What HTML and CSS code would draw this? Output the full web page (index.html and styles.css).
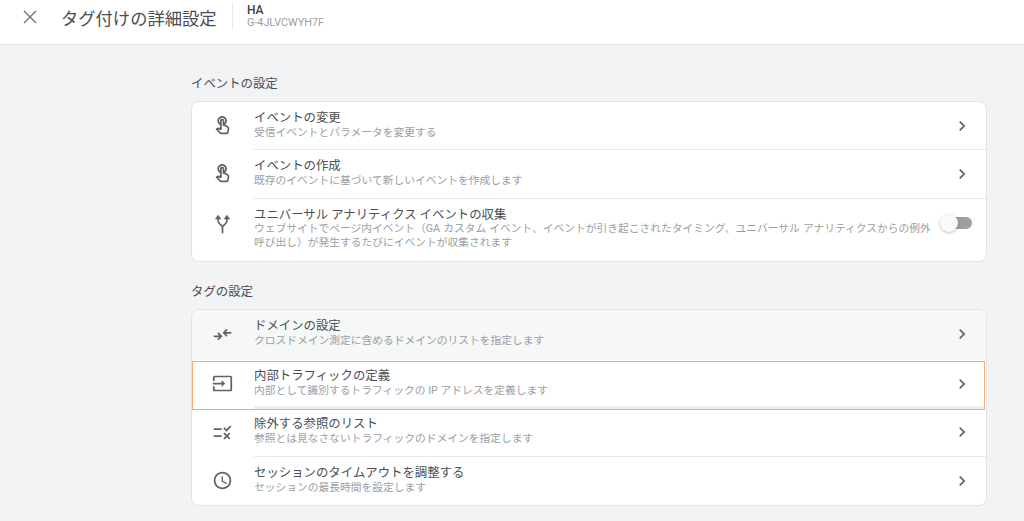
FILE: index.html
```html
<!DOCTYPE html>
<html lang="ja">
<head>
<meta charset="utf-8">
<title>タグ付けの詳細設定</title>
<link rel="stylesheet" href="styles.css">
</head>
<body>
<header class="topbar">
  <svg class="close" viewBox="0 0 14 14"><path d="M1 1l12 12M13 1L1 13"/></svg>
  <h1 class="page-title">タグ付けの詳細設定</h1>
  <div class="stream">
    <div class="stream-name">HA</div>
    <div class="stream-id">G-4JLVCWYH7F</div>
  </div>
</header>
<main class="content">
  <h2 class="section-title">イベントの設定</h2>
  <section class="card">
    <div class="row row-first">
      <svg class="icon" viewBox="0 0 24 24"><path d="M18.19 12.44l-3.24-1.62c1.29-1 2.12-2.56 2.12-4.32 0-3.03-2.47-5.5-5.5-5.5s-5.5 2.47-5.5 5.5c0 2.13 1.22 3.98 3 4.89v3.26c-2.15-.46-2.02-.44-2.26-.44-.53 0-1.03.21-1.41.59L4 16.22l5.09 5.09C9.52 21.75 10.12 22 10.74 22h6.3c.98 0 1.81-.7 1.97-1.67l.8-4.71c.22-1.3-.43-2.58-1.62-3.18zm-.35 7.56H10.74c-.27 0-.52-.11-.71-.29l-3.27-3.27 4.4.92V6.5c0-.28.22-.5.5-.5s.5.22.5.5v6h1.76l3.46 1.73c.4.2.62.63.55 1.06l-.81 4.71zM8.07 6.5c0-1.93 1.57-3.5 3.5-3.5s3.5 1.57 3.5 3.5c0 .95-.38 1.81-1 2.44V6.5c0-1.38-1.12-2.5-2.5-2.5s-2.5 1.12-2.5 2.5v2.44c-.62-.63-1-1.49-1-2.44z"/></svg>
      <div class="text">
        <div class="row-title">イベントの変更</div>
        <div class="row-desc">受信イベントとパラメータを変更する</div>
      </div>
      <svg class="chevron" viewBox="0 0 24 24"><path d="M10 6L8.59 7.41 13.17 12l-4.58 4.59L10 18l6-6z"/></svg>
    </div>
    <div class="row">
      <svg class="icon" viewBox="0 0 24 24"><path d="M18.19 12.44l-3.24-1.62c1.29-1 2.12-2.56 2.12-4.32 0-3.03-2.47-5.5-5.5-5.5s-5.5 2.47-5.5 5.5c0 2.13 1.22 3.98 3 4.89v3.26c-2.15-.46-2.02-.44-2.26-.44-.53 0-1.03.21-1.41.59L4 16.22l5.09 5.09C9.52 21.75 10.12 22 10.74 22h6.3c.98 0 1.81-.7 1.97-1.67l.8-4.71c.22-1.3-.43-2.58-1.62-3.18zm-.35 7.56H10.74c-.27 0-.52-.11-.71-.29l-3.27-3.27 4.4.92V6.5c0-.28.22-.5.5-.5s.5.22.5.5v6h1.76l3.46 1.73c.4.2.62.63.55 1.06l-.81 4.71zM8.07 6.5c0-1.93 1.57-3.5 3.5-3.5s3.5 1.57 3.5 3.5c0 .95-.38 1.81-1 2.44V6.5c0-1.38-1.12-2.5-2.5-2.5s-2.5 1.12-2.5 2.5v2.44c-.62-.63-1-1.49-1-2.44z"/></svg>
      <div class="text">
        <div class="row-title">イベントの作成</div>
        <div class="row-desc">既存のイベントに基づいて新しいイベントを作成します</div>
      </div>
      <svg class="chevron" viewBox="0 0 24 24"><path d="M10 6L8.59 7.41 13.17 12l-4.58 4.59L10 18l6-6z"/></svg>
    </div>
    <div class="row row-tall">
      <svg class="icon" viewBox="0 0 24 24"><path class="icon-line" d="M12 23v-7c0-2-5-3-5-7V5M12 16c0-2 5-3 5-7V5"/><path d="M7 2L3.2 7h7.6zM17 2l-3.8 5h7.6z"/></svg>
      <div class="text">
        <div class="row-title">ユニバーサル アナリティクス イベントの収集</div>
        <div class="row-desc row-desc-spaced">ウェブサイトでページ内イベント（GA カスタム イベント、イベントが引き起こされたタイミング、ユニバーサル アナリティクスからの例外<br>呼び出し）が発生するたびにイベントが収集されます</div>
      </div>
      <div class="switch"><span class="knob"></span></div>
    </div>
  </section>

  <h2 class="section-title section-title-second">タグの設定</h2>
  <section class="card">
    <div class="row row-tint">
      <svg class="icon" viewBox="0 0 24 24"><path d="M2 13h6.2l-2.1-2.1 1.4-1.4L12 14l-4.5 4.5-1.4-1.4L8.2 15H2zM22 11h-6.2l2.1 2.1-1.4 1.4L12 10l4.5-4.5 1.4 1.4L15.8 9H22z"/></svg>
      <div class="text">
        <div class="row-title">ドメインの設定</div>
        <div class="row-desc">クロスドメイン測定に含めるドメインのリストを指定します</div>
      </div>
      <svg class="chevron" viewBox="0 0 24 24"><path d="M10 6L8.59 7.41 13.17 12l-4.58 4.59L10 18l6-6z"/></svg>
    </div>
    <div class="row row-active">
      <svg class="icon" viewBox="0 0 24 24"><path d="M21 3.01H3c-1.1 0-2 .9-2 2V9h2V4.99h18v14.03H3V15H1v4.01c0 1.1.9 1.98 2 1.98h18c1.1 0 2-.88 2-1.98v-14c0-1.11-.9-2-2-2zM11 16l4-4-4-4v3H1v2h10v3z"/></svg>
      <div class="text">
        <div class="row-title">内部トラフィックの定義</div>
        <div class="row-desc">内部として識別するトラフィックの IP アドレスを定義します</div>
      </div>
      <svg class="chevron" viewBox="0 0 24 24"><path d="M10 6L8.59 7.41 13.17 12l-4.58 4.59L10 18l6-6z"/></svg>
    </div>
    <div class="row row-short">
      <svg class="icon" viewBox="0 0 24 24"><path d="M16.54 11 13 7.46l1.41-1.41 2.12 2.12 4.24-4.24 1.41 1.41L16.54 11zM11 7H2v2h9V7zm10 6.41L19.59 12 17 14.59 14.41 12 13 13.41 15.59 16 13 18.59 14.41 20 17 17.41 19.59 20 21 18.59 18.41 16 21 13.41zM11 15H2v2h9v-2z"/></svg>
      <div class="text">
        <div class="row-title">除外する参照のリスト</div>
        <div class="row-desc">参照とは見なさないトラフィックのドメインを指定します</div>
      </div>
      <svg class="chevron" viewBox="0 0 24 24"><path d="M10 6L8.59 7.41 13.17 12l-4.58 4.59L10 18l6-6z"/></svg>
    </div>
    <div class="row">
      <svg class="icon" viewBox="0 0 24 24"><path d="M11.99 2C6.47 2 2 6.48 2 12s4.47 10 9.99 10C17.52 22 22 17.52 22 12S17.52 2 11.99 2zM12 20c-4.42 0-8-3.58-8-8s3.58-8 8-8 8 3.58 8 8-3.58 8-8 8zm.5-13H11v6l5.25 3.15.75-1.23-4.5-2.67z"/></svg>
      <div class="text">
        <div class="row-title">セッションのタイムアウトを調整する</div>
        <div class="row-desc">セッションの最長時間を設定します</div>
      </div>
      <svg class="chevron" viewBox="0 0 24 24"><path d="M10 6L8.59 7.41 13.17 12l-4.58 4.59L10 18l6-6z"/></svg>
    </div>
  </section>
</main>
</body>
</html>
```

FILE: styles.css
```css
* { box-sizing: border-box; }
html, body { margin: 0; height: 100%; overflow: hidden; }
body {
  background: #f1f3f4;
  font-family: Roboto, "Noto Sans CJK JP", sans-serif;
  color: #3c4043;
}
.topbar {
  display: flex;
  align-items: center;
  height: 45px;
  background: #fff;
  border-bottom: 1px solid #e4e6e8;
  padding: 0 0 10px 23px;
}
.close {
  width: 14px;
  height: 14px;
  margin-right: 25px;
  fill: none;
  stroke: #6f7377;
  stroke-width: 1.4;
}
.page-title {
  margin: 0 0 0 -1px;
  width: 156px;
  font-size: 17.3px;
  font-weight: 400;
  white-space: nowrap;
  color: #4a4e52;
}
.stream {
  align-self: flex-start;
  margin: 2px 0 0 15px;
  padding-left: 14px;
  height: 28px;
  border-left: 1px solid #e8eaed;
}
.stream-name {
  font-size: 12px;
  line-height: 15px;
  padding-top: 1px;
  box-sizing: content-box;
  font-weight: 500;
  color: #3c4043;
}
.stream-id {
  font-size: 10.8px;
  line-height: 14px;
  margin-top: -2px;
  color: #9aa0a6;
}
.content {
  padding-left: 191px;
  width: 987px;
}
.section-title {
  margin: 0;
  padding-top: 29px;
  height: 56px;
  font-size: 12.4px;
  line-height: 19px;
  font-weight: 400;
  color: #4a4e52;
}
.section-title-second {
  padding-top: 20px;
  height: 47px;
}
.card {
  background: #fff;
  border: 1px solid #e2e4e6;
  border-radius: 8px;
  overflow: hidden;
}
.row {
  display: flex;
  align-items: center;
  position: relative;
  height: 49px;
  padding-left: 20px;
}
.row + .row::before {
  content: "";
  position: absolute;
  left: 62px;
  right: 0;
  top: 0;
  border-top: 1px solid #e6e8ea;
}
.row-first { height: 47px; }
.row-short { height: 46px; padding-bottom: 2px; }
.row-tall { height: 63px; align-items: flex-start; padding-top: 9px; }
.row-tint { background: #f6f7f7; height: 50px; padding-bottom: 2px; }
.row-active {
  background: #fff;
  height: 49px;
  margin: 1px 1px 0 0;
  border: 1px solid #f8ab6c;
  padding: 0 0 4px 19px;
}
.row.row-active::before { display: none; }
.row-active::after {
  content: "";
  position: absolute;
  left: 61px;
  right: 0;
  bottom: 0;
  height: 3px;
  background: #f0f0f0;
}
.row-active + .row::before { display: none; }
.icon {
  flex: none;
  width: 21px;
  height: 21px;
  margin-right: 21px;
  fill: #5f6368;
}
.icon-line {
  fill: none;
  stroke: #5f6368;
  stroke-width: 2;
}
.row-tall .icon { margin-top: 6px; }
.text { flex: 1; min-width: 0; padding-bottom: 2px; }
.row-title {
  font-size: 12.4px;
  line-height: 15px;
  margin-bottom: 1px;
  color: #4a4e52;
  white-space: nowrap;
}
.row-tall .row-title { margin-bottom: 0; }
.row-desc {
  font-size: 10.75px;
  line-height: 14px;
  color: #9a9ea3;
  white-space: nowrap;
}
.row-desc-spaced { word-spacing: 0.4px; }
.chevron {
  flex: none;
  width: 20px;
  height: 20px;
  margin-right: 14px;
  fill: #5f6368;
}
.row-active .chevron { margin-right: 12px; }
.switch {
  position: absolute;
  left: 750px;
  top: 19px;
  width: 30px;
  height: 12px;
  border-radius: 6px;
  background: #9e9e9e;
}
.knob {
  position: absolute;
  left: -2px;
  top: -3px;
  width: 18px;
  height: 18px;
  border-radius: 50%;
  background: #fafafa;
  box-shadow: 0 1px 3px rgba(0,0,0,.25);
}
```
